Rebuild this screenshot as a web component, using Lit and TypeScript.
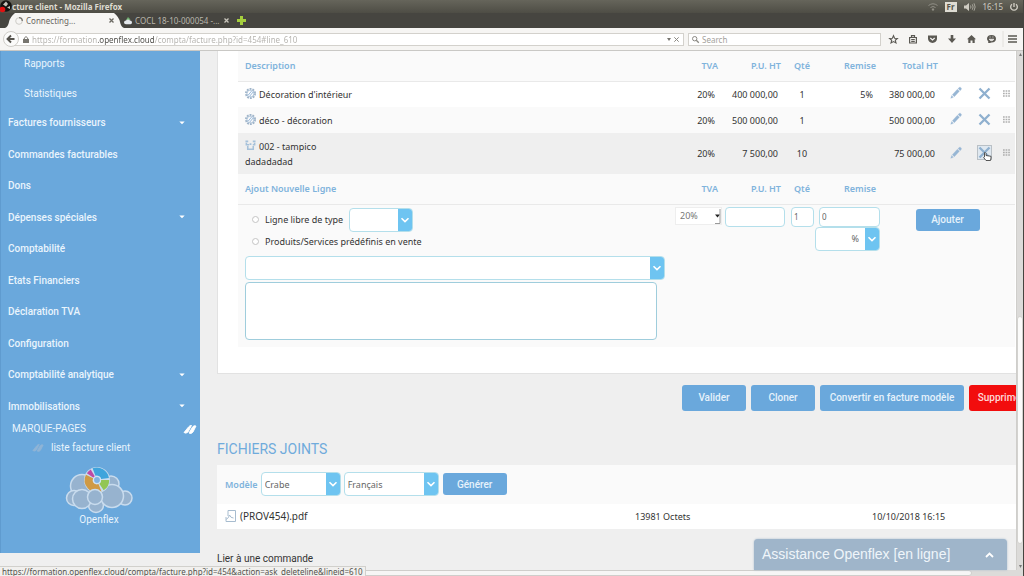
import { LitElement, html, css, svg, nothing } from "lit";
import { customElement, property } from "lit/decorators.js";

const chevron = html`<svg class="chev" viewBox="0 0 10 10" aria-hidden="true"><path d="M1.5 3.2 5 6.6 8.5 3.2" fill="none" stroke="#fff" stroke-width="1.6" /></svg>`;
const cog = svg`<circle cx="6" cy="6" r="4.700" fill="none" stroke="#9fb4c9" stroke-width="2.600" stroke-dasharray="1.900 1.050" /><circle cx="6" cy="6" r="3.900" fill="none" stroke="#b3c8dc" stroke-width="1" /><path d="M3.300 8 7.300 3.200M5 9 9 4.200" stroke="#8fb4da" stroke-width="1" />`;
const box = svg`<path d="M.5 1.500h3M8.500 1.500h3M1.500 3v2.200H4.500M10.500 3v2.200H8.500M3 6.500v3.500h6V6.500M5 4.500h2" fill="none" stroke="#a6c1da" stroke-width="1.700" />`;
const pencil = svg`<path d="M.8 12.300 1.800 9.200 3.700 11.200ZM2.500 8.300 8 2.400 10.200 4.600 4.700 10.500ZM8.700 1.700 10.200.4Q11-.2 11.900.7T12.300 2.500L11 4Z" fill="#97b6d4" stroke="#97b6d4" stroke-width=".3" />`;
const cross = svg`<path d="M1.500 1.500 11.500 11.500M11.500 1.500 1.500 11.500" stroke="#8fb0cf" stroke-width="2.300" />`;
const tag = svg`<path d="M1 8.500 5.500 3Q7 1 8.500 1.500L5 8Q3 10 1 8.500ZM6 9 9.500 3Q11 1 13 2L10 8Q8 10.500 6 9Z" fill="currentColor" stroke="currentColor" stroke-width=".9" />`;

interface Line {
  icon: unknown;
  name: string;
  detail?: string;
  price: string;
  qty: string;
  discount: string;
  total: string;
  hover?: boolean;
}

const lines: Line[] = [
  { icon: cog, name: "Décoration d'intérieur", price: "400 000,00", qty: "1", discount: "5%", total: "380 000,00" },
  { icon: cog, name: "déco - décoration", price: "500 000,00", qty: "1", discount: "", total: "500 000,00" },
  { icon: box, name: "002 - tampico", detail: "dadadadad", price: "7 500,00", qty: "10", discount: "", total: "75 000,00", hover: true },
];

const menu: { label: string; more?: boolean }[] = [
  { label: "Factures fournisseurs", more: true },
  { label: "Commandes facturables" },
  { label: "Dons" },
  { label: "Dépenses spéciales", more: true },
  { label: "Comptabilité" },
  { label: "Etats Financiers" },
  { label: "Déclaration TVA" },
  { label: "Configuration" },
  { label: "Comptabilité analytique", more: true },
  { label: "Immobilisations", more: true },
];

const base = css`
  * { box-sizing: border-box; }
  svg { display: block; flex: none; overflow: visible; }
  button, input, select, textarea { font: inherit; color: inherit; margin: 0; padding: 0; border: 0; background: none; outline: none; min-width: 0; }
  a { color: inherit; text-decoration: none; }
  ul { list-style: none; margin: 0; padding: 0; }
`;

@customElement("browser-chrome")
export class BrowserChrome extends LitElement {
  static styles = [base, css`
    :host { display: block; font-family: "Noto Sans", "Open Sans", sans-serif; font-size: 8px; }
    .title { display: flex; align-items: center; height: 13px; padding-right: 5px; background: linear-gradient(#66655b, #4e4d45); color: #dedbd0; }
    .title b { flex: 1; }
    .tray { display: flex; align-items: center; gap: 7px; color: #cfccc2; }
    .lang { background: #dedcd3; color: #55534b; font-weight: 700; line-height: 10px; padding: 0 2px; }
    .tabs { display: flex; height: 15px; padding-left: 5px; background: #464540; color: #b9b6ac; align-items: center; }
    .tab { display: flex; align-items: center; height: 15px; white-space: nowrap; }
    .face { display: flex; align-items: center; gap: 3px; height: 15px; }
    .active .face { background: #f6f5f3; color: #68665f; width: 99px; }
    .face span { flex: 1; text-align: left; }
    .other { width: 105px; }
    .plus { margin-left: 8px; }
    .bar { display: flex; align-items: center; height: 23px; padding: 0 6px 0 3px; background: #f6f5f3; border-bottom: 1px solid #c9c8c5; gap: 4px; color: #6b6962; }
    .field { display: flex; align-items: center; height: 13px; border: 1px solid #d3d1cc; background: #fff; }
    .address { flex: 1; gap: 3px; padding: 0 4px 0 14px; margin-left: -15px; }
    .back { position: relative; z-index: 1; }
    .url { flex: 1; color: transparent; -webkit-background-clip: text; background-clip: text; background-image: linear-gradient(90deg, #b2b0ab 66px, #4a4944 66px 123px, #b2b0ab 123px); }
    .search { width: 193px; gap: 3px; padding: 0 3px; }
    .search input { flex: 1; }
    .search input::placeholder { color: #a3a19b; opacity: 1; }
    .tools { display: flex; align-items: center; gap: 11px; padding-left: 4px; }
  `];

  render() {
    return html`
      <div class="title">
        <svg width="12" height="13" viewBox="0 0 12 13"><circle cx="6" cy="6" r="5.800" fill="#171512" /><path d="M6 1.500 8 4 6 6.500 3 4.500ZM7 7.500l3-1.500v3Z" fill="#c8c5bc" /><circle cx="2.500" cy="9.500" r="2.800" fill="#e01212" /></svg>
        <b>cture client - Mozilla Firefox</b>
        <div class="tray">
          <svg width="10" height="8" viewBox="0 0 10 8" fill="none" stroke="#918f86"><path d="M.5 2.500Q5-1 9.500 2.500M2.500 4.500Q5 2.500 7.500 4.500" /><path d="M4 6h2L5 7.500Z" fill="#ccc" /></svg>
          <span class="lang">Fr</span>
          <svg width="12" height="8" viewBox="0 0 12 8"><path d="M0 2.500h2L5 0v8L2 5.500H0Z" fill="#cfccc2" /><path d="M6.500 2.500Q7.500 4 6.500 5.500M8.300 1.300Q10 4 8.300 6.700M10 .3Q12.300 4 10 7.700" fill="none" stroke="#a9a79d" /></svg>
          <span>16:15</span>
          <svg width="8" height="8" viewBox="0 0 8 8" fill="none" stroke="#d5d2c8" stroke-width="1.300"><path d="M2 1.300A3.300 3.300 0 1 0 6 1.300M4 0v4" /></svg>
        </div>
      </div>
      <div class="tabs">
        <button class="tab active">
          <svg width="10" height="15" viewBox="0 0 10 15"><path d="M0 15Q3 14 4 9T10 0V15Z" fill="#f6f5f3" /></svg>
          <span class="face">
            <svg width="8" height="8" viewBox="0 0 8 8" fill="none"><circle cx="4" cy="4" r="3.300" stroke="#cfcdc8" /><path d="M4 .7A3.300 3.300 0 0 1 7.300 4" stroke="#77756e" stroke-width="1.300" /></svg>
            <span>Connecting...</span>
            <svg width="5" height="5" viewBox="0 0 5 5"><path d="M.5.5l4 4M4.500.5l-4 4" stroke="#6b6962" stroke-width="1.300" /></svg>
          </span>
          <svg width="10" height="15" viewBox="0 0 10 15"><path d="M10 15Q7 14 6 9T0 0V15Z" fill="#f6f5f3" /></svg>
        </button>
        <button class="tab other">
          <span class="face other">
            <svg width="8" height="8" viewBox="0 0 8 8"><path d="M4 0 6.500 2.500 4 4 2 3Z" fill="#6fae6f" /><path d="M0 5.500Q0 3.500 2 3.500 4 1.500 6 3.500 8 3.500 8 5.500T6 7.200H2Q0 7 0 5.500Z" fill="#e4e8ec" /></svg>
            <span>COCL 18-10-000054 -...</span>
            <svg width="5" height="5" viewBox="0 0 5 5"><path d="M.5.5l4 4M4.500.5l-4 4" stroke="#c9c6bc" stroke-width="1.300" /></svg>
          </span>
        </button>
        <button class="plus" aria-label="Nouvel onglet"><svg width="9" height="9" viewBox="0 0 9 9"><path d="M3 0h3v3h3v3H6v3H3V6H0V3h3Z" fill="#a5cf3d" /></svg></button>
      </div>
      <div class="bar">
        <button class="back" aria-label="Retour"><svg width="16" height="16" viewBox="0 0 16 16"><circle cx="8" cy="8" r="7.500" fill="#fbfbfa" stroke="#cfcdc8" /><path d="M8 4.500 4.500 8 8 11.500M5 8h6.500" fill="none" stroke="#55534d" stroke-width="1.900" /></svg></button>
        <div class="field address">
          <svg width="6" height="7" viewBox="0 0 6 7"><path d="M0 3h6v4H0Z" fill="#77756f" /><path d="M1.300 3V2Q3-.8 4.700 2V3" fill="none" stroke="#77756f" /></svg>
          <input class="url" aria-label="Adresse" value="https://formation.openflex.cloud/compta/facture.php?id=454#line_610" />
          <svg width="4" height="3" viewBox="0 0 4 3"><path d="M0 0h4L2 3Z" fill="#77756f" /></svg>
          <svg width="5" height="5" viewBox="0 0 5 5"><path d="M.3.3l4.400 4.400M4.700.3.300 4.700" stroke="#8b8983" /></svg>
        </div>
        <div class="field search">
          <svg width="7" height="7" viewBox="0 0 7 7" fill="none" stroke="#8b8983"><circle cx="2.700" cy="2.700" r="2.200" /><path d="M4.300 4.300 6.800 6.800" stroke-width="1.300" /></svg>
          <input aria-label="Recherche" placeholder="Search" />
        </div>
        <div class="tools">
          <svg width="9" height="9" viewBox="0 0 9 9"><path d="M4.500.7 5.600 3.200 8.400 3.500 6.300 5.300 7 8 4.500 6.600 2 8 2.700 5.300.6 3.500 3.400 3.200Z" fill="none" stroke="#5b5953" stroke-width="1.100" /></svg>
          <svg width="8" height="9" viewBox="0 0 8 9" fill="none" stroke="#5b5953"><path d="M.6 2.500h6.800V8H.6ZM2.500 2V.7h3V2M2.200 4.500h3.600M2.200 6.300h3.600" stroke-width="1.200" /></svg>
          <svg width="9" height="8" viewBox="0 0 9 8"><path d="M0 .5h9V4Q8.500 7.500 4.500 8 .5 7.500 0 4Z" fill="#5b5953" /><path d="M2.300 3 4.500 5 6.700 3" fill="none" stroke="#f6f5f3" stroke-width="1.200" /></svg>
          <svg width="8" height="8" viewBox="0 0 8 8"><path d="M2.700 0h2.600v3.500H8L4 8 0 3.500h2.700Z" fill="#5b5953" /></svg>
          <svg width="9" height="8" viewBox="0 0 9 8"><path d="M4.500 0 9 4.300H7.700V8H5.500V5.500h-2V8H1.300V4.300H0Z" fill="#5b5953" /></svg>
          <svg width="9" height="8" viewBox="0 0 9 8"><path d="M4.500 0Q9 .3 9 3.800T4.500 7.500Q3 8 1 8 1.800 7 1 6 0 5 0 3.800 0 .3 4.500 0Z" fill="#5b5953" /><path d="M2 4.200h5Q4.500 7.300 2 4.200ZM2.500 2h1.300M5.200 2h1.300" fill="#f6f5f3" stroke="#f6f5f3" stroke-width=".6" /></svg>
          <svg width="10" height="8" viewBox="0 0 10 8"><path d="M1 1h9M1 4h9M1 7h9" stroke="#5b5953" stroke-width="1.500" /><path d="M-4-4v16" stroke="#e2e0dc" /></svg>
        </div>
      </div>
    `;
  }
}

@customElement("side-menu")
export class SideMenu extends LitElement {
  static styles = [base, css`
    :host { display: flex; flex-direction: column; width: 200px; height: 502px; background: #6aa8dc; color: #e9f4fc; font-size: 10px; border-left: 1px solid #5f9bcf; padding-top: 7px; }
    .sub { display: grid; gap: 18px; padding-left: 23px; margin-bottom: 7px; line-height: 12px; }
    .items { display: grid; grid-auto-rows: 1fr; height: 315px; }
    .items a { display: flex; align-items: center; justify-content: space-between; height: 100%; padding: 0 15px 0 7px; font-weight: 500; }
    .marks { display: flex; align-items: center; justify-content: space-between; padding: 0 3px 0 11px; line-height: 14px; }
    .mark { display: flex; align-items: center; gap: 7px; padding-left: 31px; line-height: 24px; }
    .dim { color: #8fb4d6; }
    .logo { display: grid; justify-items: center; line-height: 14px; padding: 7px 3px 0 0; }
  `];

  render() {
    return html`
      <ul class="sub"><li><a href="#">Rapports</a></li><li><a href="#">Statistiques</a></li></ul>
      <ul class="items">
        ${menu.map((m) => html`<li><a href="#"><span>${m.label}</span>${m.more ? html`<svg width="6" height="4" viewBox="0 0 6 4"><path d="M.3.500h5.400L3 3.300Z" fill="#fff" /></svg>` : nothing}</a></li>`)}
      </ul>
      <div class="marks"><span>MARQUE-PAGES</span><svg width="14" height="11" viewBox="0 0 14 11" fill="none" color="#fff">${tag}</svg></div>
      <a class="mark" href="#"><svg class="dim" width="12" height="10" viewBox="0 0 14 11">${tag}</svg>liste facture client</a>
      <a class="logo" href="#">
        <svg width="68" height="46" viewBox="0 0 68 46">
          <g fill="#97b3cf" stroke="#c9dcee" stroke-width="1.500">
            <circle cx="17" cy="19" r="11.500" /><circle cx="46" cy="17" r="8" /><circle cx="9" cy="31" r="7.500" /><circle cx="60" cy="31" r="7" />
            <circle cx="31" cy="38" r="7.500" /><circle cx="17" cy="32" r="9.500" /><circle cx="47" cy="29" r="11.500" />
          </g>
          <circle cx="32" cy="13" r="13" fill="#c9dcee" />
          <g fill="none" stroke-width="8">
            <path d="M29 5.100A8.200 8.200 0 0 1 40 11.500" stroke="#3fa4dc" />
            <path d="M40.200 13A8.200 8.200 0 0 1 36.500 20" stroke="#92c653" />
            <path d="M35 20.700A8.200 8.200 0 0 1 24.500 9.500" stroke="#cf9a45" />
            <path d="M25.200 8.500A8.200 8.200 0 0 1 27.800 6" stroke="#bd4aa5" />
          </g>
          <circle cx="32" cy="13" r="3.500" fill="#7fb2e0" stroke="#d5e5f3" stroke-width="1.200" />
          <circle cx="30" cy="30" r="7.500" fill="#97b3cf" stroke="#c9dcee" stroke-width="1.500" />
        </svg>
        <span>Openflex</span>
      </a>
    `;
  }
}

@customElement("pick-list")
export class PickList extends LitElement {
  @property() label = "";
  @property() value = "";
  @property({ type: Boolean }) end = false;

  static styles = [base, css`
    :host { display: flex; height: 24px; border: 1px solid #b4dfeb; border-radius: 4px; background: #fff; color: #666; font-size: 9px; overflow: hidden; }
    select { flex: 1; appearance: none; padding-left: 3px; }
    .end { text-align-last: right; padding-right: 6px; }
    .arrow { display: grid; place-items: center; width: 14px; background: #6ec4f1; pointer-events: none; }
    .chev { width: 10px; height: 10px; }
  `];

  render() {
    return html`<select class=${this.end ? "end" : ""} aria-label=${this.label}><option>${this.value}</option></select><span class="arrow">${chevron}</span>`;
  }
}

@customElement("app-root")
export class AppRoot extends LitElement {
  static styles = [base, css`
    :host { display: flex; flex-direction: column; height: 100vh; overflow: hidden; position: relative; background: #efefef; border-right: 1px solid #45443f; border-bottom: 1px solid #a5a4a0; font-family: Roboto, sans-serif; font-size: 10px; color: #333; }
    browser-chrome { flex: none; }
    .middle { flex: 1; min-height: 0; display: flex; }
    .view { flex: 1; min-width: 0; overflow: hidden; display: flex; align-items: flex-start; gap: 17px; }
    side-menu { flex: none; }
    .page { flex: none; width: calc(100% - 187px); font-family: "Noto Sans", "Open Sans", sans-serif; }
    .panel { background: #fff; border: 1px solid #e2e2e2; border-top: 0; padding: 0 30px 26px 20px; }
    table { width: 100%; border-collapse: collapse; table-layout: fixed; }
    th, td { padding: 0; font-weight: 400; text-align: right; }
    .lines { background: #fafafa; font-size: 9px; }
    .head th { color: #7fb3dc; font-weight: 600; height: 30px; padding-right: 4px; border-bottom: 1px solid #e9e9e9; }
    .lines .name { text-align: left; padding-left: 7px; }
    .lines .qty { text-align: center; padding-right: 0; }
    .line td { height: 26px; line-height: 15px; padding-right: 7px; }
    .line:nth-child(1) { background: #fff; }
    .line.hover { background: #efefef; }
    .line.hover td { height: 41px; }
    .line .act { padding: 0 0 2px; }
    .act button, .act svg { margin: 0 auto; display: block; }
    .label { display: flex; align-items: center; gap: 3px; }
    .label svg { margin-bottom: 2px; }
    .c-tva { width: 62px; } .c-pu { width: 63px; } .c-qty { width: 34px; } .c-rem { width: 61px; } .c-tot { width: 62px; } .c-act { width: 28px; } .c-grip { width: 17px; }
    .target { position: relative; }
    .act .hand { position: absolute; left: 13px; top: 6px; margin: 0; }
    .form td { vertical-align: top; padding: 2px 0 7px; }
    .form .desc { padding: 3px 0 7px 7px; text-align: left; }
    .choice { display: flex; align-items: center; height: 24px; gap: 6px; padding-left: 7px; }
    .choice.low { height: 20px; }
    .choice input { appearance: none; width: 7px; height: 7px; border: 1px solid #c4c4c4; border-radius: 50%; background: #fff; }
    .choice pick-list { width: 64px; }
    .product { width: 420px; margin: 4px 0 2px; }
    textarea { display: block; width: 412px; max-width: 100%; height: 58px; border: 1px solid #9fcddc; border-radius: 4px; background: #fff; resize: none; }
    .box { display: block; width: 100%; height: 20px; border: 1px solid #b4dfeb; border-radius: 4px; background: #fff; padding: 0 2px; color: #666; font-size: 8px; }
    .tva { width: 47px; height: 18px; margin-left: 15px; border: 1px solid #eee; display: flex; align-items: center; background: #fff; color: #777; font-size: 9px; }
    .tva select { flex: 1; appearance: none; padding-left: 4px; }
    .form .pu { padding-left: 3px; }
    .form .q { padding-left: 6px; padding-right: 5px; }
    .unit { margin-left: -4px; }
    .form .add { padding-top: 4px; text-align: center; }
    .btn { height: 26px; border-radius: 3px; background: #6aa8dc; color: #e6f2fb; font-family: Roboto, sans-serif; font-size: 10px; font-weight: 500; text-align: center; }
    .add .btn, .gen { width: 64px; height: 22px; }
    .actions { display: flex; justify-content: flex-end; gap: 5px; padding: 11px 13px 0 0; }
    .actions .btn { width: 64px; }
    .actions .wide { width: 144px; }
    .actions .danger { background: #f20d0d; color: #ffd9d9; }
    h2 { margin: 28px 0 6px; font: 400 14px/20px Roboto, sans-serif; color: #6fabdc; }
    .files { background: #fff; }
    .tools { display: flex; align-items: center; gap: 3px; height: 39px; padding-left: 8px; background: #fafafa; }
    .tools label { color: #7fb3dc; font-weight: 600; font-size: 9px; }
    .model { width: 80px; } .language { width: 95px; }
    .gen { margin-left: 1px; }
    .files td { height: 25px; text-align: left; }
    .files .size { width: 237px; font-size: 9px; } .files .date { width: 174px; font-size: 9px; }
    .pdf { display: flex; align-items: center; gap: 4px; padding-left: 8px; }
    .link { margin: 23px 0 0; font: 400 10px/14px Roboto, sans-serif; }
    .vbar { width: 7px; background: #dcdbd9; display: flex; flex-direction: column; align-items: center; justify-content: space-between; padding: 2px 0; border-left: 1px solid #cfcecb; position: relative; }
    .vbar .knob { position: absolute; left: 0; right: 0; top: 51%; bottom: 5%; background: #fbfbfa; border-radius: 3px; border: 1px solid #d3d2cf; }
    .hbar { height: 6px; flex: none; background: #dcdbd9; }
    .hbar .knob { width: 95%; height: 6px; background: #f6f6f5; border: 1px solid #cfcecb; border-radius: 0 3px 3px 0; }
    .status { position: absolute; left: 0; bottom: 0; height: 10px; padding: 0 2px; background: #f1f0ee; border: 1px solid #d1d0cc; border-left: 0; border-bottom: 0; font: 8px/9px "Noto Sans", sans-serif; color: #55534d; }
    .chat { position: absolute; right: 16px; bottom: 6px; width: 253px; height: 31px; display: flex; align-items: center; justify-content: space-between; padding: 0 13px 0 8px; background: #9fb5ca; border-radius: 4px 4px 0 0; color: #eff5fa; font: 14px/31px "Liberation Sans", Arial, sans-serif; box-shadow: 0 0 2px #9fb5ca; }
  `];

  private heads(first: string, total: string) {
    return html`<tr class="head"><th class="name">${first}</th><th>TVA</th><th>P.U. HT</th><th class="qty">Qté</th><th>Remise</th><th>${total}</th><th></th><th></th><th></th></tr>`;
  }

  render() {
    return html`
      <browser-chrome></browser-chrome>
      <div class="middle">
        <div class="view">
          <side-menu></side-menu>
          <main class="page">
            <section class="panel">
              <table class="lines">
                <colgroup><col /><col class="c-tva" /><col class="c-pu" /><col class="c-qty" /><col class="c-rem" /><col class="c-tot" /><col class="c-act" /><col class="c-act" /><col class="c-grip" /></colgroup>
                <thead>${this.heads("Description", "Total HT")}</thead>
                <tbody>
                  ${lines.map((l) => html`
                    <tr class="line ${l.hover ? "hover" : ""}">
                      <td class="name"><div class="label"><svg width="11" height="11" viewBox="0 0 12 12">${l.icon}</svg>${l.name}</div>${l.detail ? html`<div>${l.detail}</div>` : nothing}</td>
                      <td>20%</td><td>${l.price}</td><td class="qty">${l.qty}</td><td>${l.discount}</td><td>${l.total}</td>
                      <td class="act"><button aria-label="Modifier"><svg width="12" height="12" viewBox="0 0 13 13">${pencil}</svg></button></td>
                      <td class="act"><div class="target"><button aria-label="Supprimer"><svg width="13" height="13" viewBox="0 0 13 13">${l.hover ? svg`<rect x="-.5" y="-.5" width="14" height="14" fill="#dfe8f0" stroke="#8a949c" stroke-dasharray="1 1" />` : nothing}${cross}</svg></button>
                        ${l.hover ? html`<svg class="hand" width="9" height="9" viewBox="0 0 9 9"><path d="M1.500.6Q2.500.2 3 1.300V3.500L8 4.300V6L7.500 8.500H3L.6 5.500 1.500 5Z" fill="#fff" stroke="#444" stroke-width=".9" /></svg>` : nothing}</div></td>
                      <td class="act"><svg width="7" height="7" viewBox="0 0 7 7"><path d="M0 1h7M0 3.500h7M0 6h7" stroke="#aeaeae" stroke-width="1.600" stroke-dasharray="1.700 .9" /></svg></td>
                    </tr>`)}
                </tbody>
                <tbody>
                  ${this.heads("Ajout Nouvelle Ligne", "")}
                  <tr class="form">
                    <td class="desc">
                      <div class="choice"><input type="radio" name="kind" id="free" /><label for="free">Ligne libre de type</label><pick-list label="Type de ligne"></pick-list></div>
                      <div class="choice low"><input type="radio" name="kind" id="preset" /><label for="preset">Produits/Services prédéfinis en vente</label></div>
                      <pick-list class="product" label="Produit"></pick-list>
                      <textarea aria-label="Description"></textarea>
                    </td>
                    <td><div class="tva"><select aria-label="TVA"><option>20%</option></select><svg width="7" height="16" viewBox="0 0 7 16"><path d="M1 6.500h5L3.500 9.500Z" fill="#222" /><path d="M6 1V15.500H1" fill="none" stroke="#999" /></svg></div></td>
                    <td class="pu"><input class="box" aria-label="P.U. HT" /></td>
                    <td class="q"><input class="box" aria-label="Qté" value="1" /></td>
                    <td><input class="box" aria-label="Remise" value="0" /><pick-list class="unit" end label="Unité de remise" value="%"></pick-list></td>
                    <td class="add" colspan="4"><button class="btn">Ajouter</button></td>
                  </tr>
                </tbody>
              </table>
            </section>
            <div class="actions">
              <button class="btn">Valider</button><button class="btn">Cloner</button><button class="btn wide">Convertir en facture modèle</button><button class="btn danger">Supprimer</button>
            </div>
            <h2>FICHIERS JOINTS</h2>
            <section class="files">
              <div class="tools">
                <label>Modèle</label>
                <pick-list class="model" label="Modèle" value="Crabe"></pick-list>
                <pick-list class="language" label="Langue" value="Français"></pick-list>
                <button class="btn gen">Générer</button>
              </div>
              <table><tbody><tr>
                <td><a class="pdf" href="#"><svg width="11" height="13" viewBox="0 0 11 13" fill="none" stroke="#a7bccf"><path d="M3 .5h7.500v11H1V7M3 .5V6" /><path d="M1 9.500Q4 8 4.500 5 5.500 8 8.500 8" /></svg>(PROV454).pdf</a></td>
                <td class="size">13981 Octets</td><td class="date">10/10/2018 16:15</td>
              </tr></tbody></table>
            </section>
            <p class="link">Lier à une commande</p>
          </main>
        </div>
        <div class="vbar"><svg width="3" height="3" viewBox="0 0 3 3"><path d="M0 3h3L1.500 0Z" fill="#777" /></svg><div class="knob"></div><svg width="3" height="3" viewBox="0 0 3 3"><path d="M0 0h3L1.500 3Z" fill="#777" /></svg></div>
      </div>
      <div class="hbar"><div class="knob"></div></div>
      <div class="status">https://formation.openflex.cloud/compta/facture.php?id=454&action=ask_deleteline&lineid=610</div>
      <button class="chat"><span>Assistance Openflex [en ligne]</span><svg width="9" height="6" viewBox="0 0 9 6"><path d="M1 5 4.500 1.500 8 5" fill="none" stroke="#fff" stroke-width="1.800" /></svg></button>
    `;
  }
}
